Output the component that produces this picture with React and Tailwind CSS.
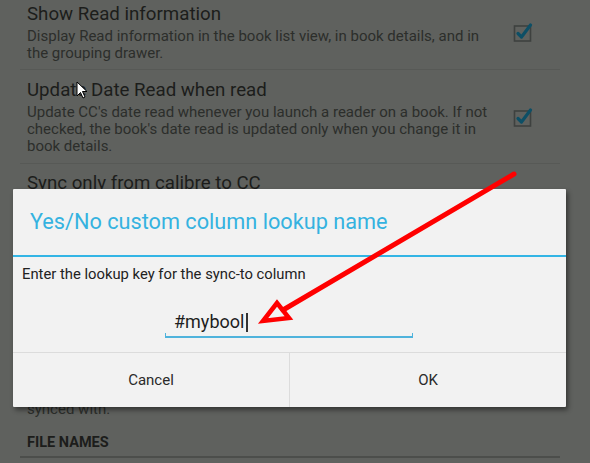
import React from "react";

function Check() {
  return (
    <svg width="22" height="22" viewBox="0 0 22 22" className="shrink-0">
      <rect x="2.5" y="5" width="16" height="15" fill="none" stroke="#3e413f" strokeWidth="1.6" />
      <path d="M6 12.5 L9.5 16 L18.5 4" fill="none" stroke="#0d4f66" strokeWidth="3.2" strokeLinecap="round" strokeLinejoin="round" />
    </svg>
  );
}

export default function App() {
  return (
    <div className="relative w-[590px] h-[463px] overflow-hidden bg-[#5f615e] font-['Roboto',sans-serif]">
      <div className="pl-[20px] pr-[30px]">
        {/* Item 1 */}
        <div className="flex items-center justify-between pl-[7px] pr-[26px] pt-[2px] pb-[7px]">
          <div>
            <div className="text-[18.7px] leading-[24px] text-[#1c1d1b]">Show Read information</div>
            <div className="mt-[2px] text-[15px] leading-[17px] text-[#2c2e2b] whitespace-nowrap">
              <div>Display Read information in the book list view, in book details, and in</div>
              <div>the grouping drawer.</div>
            </div>
          </div>
          <Check />
        </div>
        <div className="h-px bg-[#575956]" />
        {/* Item 2 */}
        <div className="flex items-center justify-between pl-[7px] pr-[26px] pt-[8px] pb-[8px]">
          <div>
            <div className="text-[18.7px] leading-[24px] text-[#1c1d1b]">Update Date Read when read</div>
            <div className="mt-[2px] text-[15px] leading-[17px] text-[#2c2e2b] whitespace-nowrap">
              <div>Update CC's date read whenever you launch a reader on a book. If not</div>
              <div>checked, the book's date read is updated only when you change it in</div>
              <div>book details.</div>
            </div>
          </div>
          <Check />
        </div>
        <div className="h-px bg-[#575956]" />
        {/* Item 3 */}
        <div className="pl-[7px] pt-[7px]">
          <div className="text-[18.7px] leading-[24px] text-[#1c1d1b]">Sync only from calibre to CC</div>
          <div className="mt-[206px] text-[15px] leading-[17px] text-[#2c2e2b]">synced with.</div>
        </div>
        <div className="pl-[7px] mt-[16px] text-[14.5px] leading-[17px] font-bold text-[#1c1d1b]">FILE NAMES</div>
        <div className="mt-[5px] h-[2px] bg-[#4c4e4b]" />
      </div>

      {/* Dialog */}
      <div className="absolute left-[13px] top-[189px] w-[553px] h-[218px] bg-[#f2f2f2] rounded-[1px] shadow-[2px_3px_5px_rgba(0,0,0,0.45)] flex flex-col">
        <div className="h-[66px] flex items-center pl-[17px] text-[21.7px] text-[#35b2e0]">
          Yes/No custom column lookup name
        </div>
        <div className="h-[2px] bg-[#33b5e5]" />
        <div className="pl-[9px] pt-[9px] text-[14.8px] leading-[17px] text-[#222]">
          Enter the lookup key for the sync-to column
        </div>
        <div className="ml-[152px] w-[248px] mt-[27px]">
          <div className="pl-[9px] h-[24px] flex items-center text-[18px] leading-[24px] text-[#1e1e1e]">
            #mybool<span className="inline-block w-[2px] h-[19px] bg-[#333] ml-[2px]" />
          </div>
          <div className="mt-[-1px] h-[5px] border-l-[1.5px] border-r-[1.5px] border-b-2 border-[#4fb3dc]" />
        </div>
        <div className="mt-auto h-[55px] flex border-t border-[#dcdcdc] text-[15px] text-[#2a2a2a]">
          <div className="w-[276px] flex items-center justify-center">Cancel</div>
          <div className="flex-1 flex items-center justify-center border-l border-[#dcdcdc]">OK</div>
        </div>
      </div>

      {/* Red arrow annotation */}
      <svg className="absolute left-0 top-0 pointer-events-none" width="590" height="463" viewBox="0 0 590 463">
        <line x1="514" y1="174" x2="283" y2="310" stroke="#ff0000" strokeWidth="5" strokeLinecap="round" />
        <polygon points="263,321 277,303 289,318" fill="none" stroke="#ff0000" strokeWidth="4.5" strokeLinejoin="miter" />
      </svg>

      {/* Mouse pointer */}
      <svg className="absolute left-[76px] top-[81px] pointer-events-none" width="14" height="20" viewBox="0 0 14 20">
        <path d="M1 1 L1 15 L4.5 11.5 L7 17 L9 16 L6.5 10.5 L11 10.5 Z" fill="#fff" stroke="#000" strokeWidth="1" strokeLinejoin="round" />
      </svg>
    </div>
  );
}
